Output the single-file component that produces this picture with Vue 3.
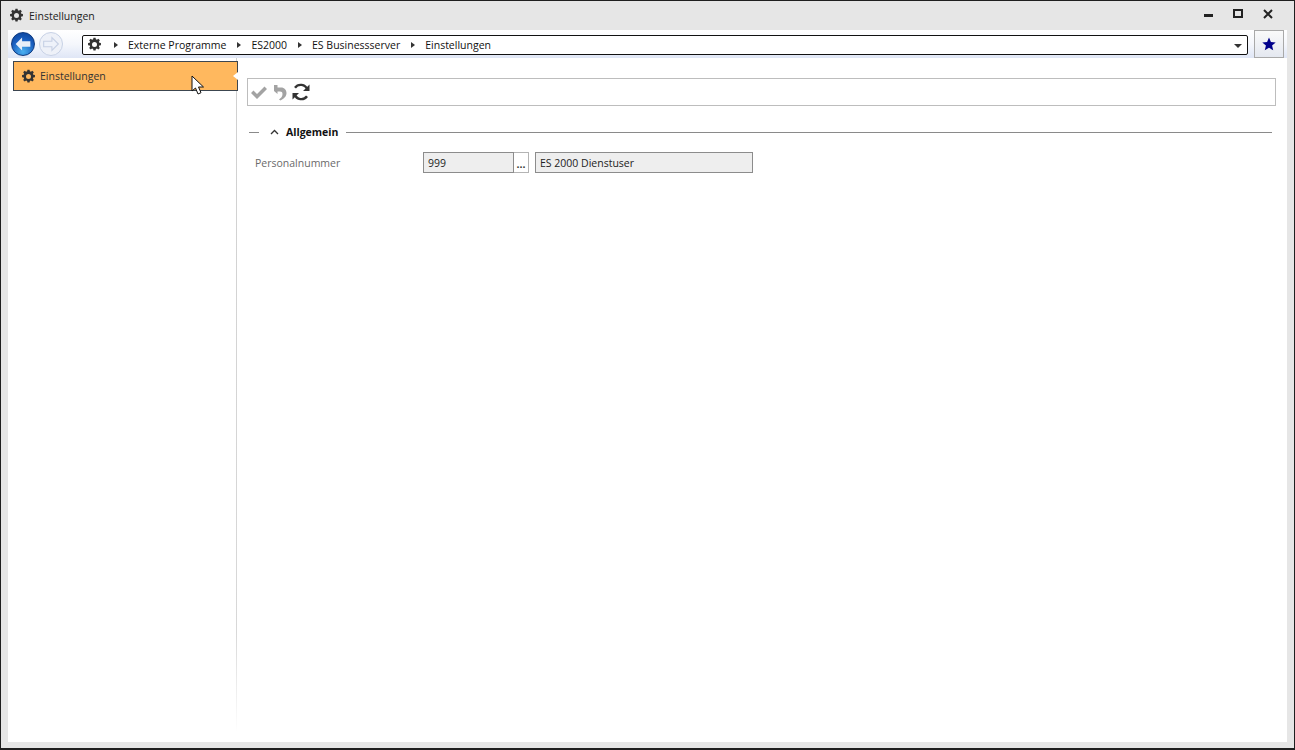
<script setup>
const crumbs = ['Externe Programme', 'ES2000', 'ES Businessserver', 'Einstellungen']
const gear = 'M10.3 1h3.4l.5 2.6 1.7.7 2.2-1.5 2.4 2.4-1.5 2.2.7 1.7 2.6.5v3.4l-2.6.5-.7 1.7 1.5 2.2-2.4 2.4-2.2-1.5-1.7.7-.5 2.6h-3.4l-.5-2.6-1.7-.7-2.2 1.5-2.4-2.4 1.5-2.2-.7-1.7-2.6-.5v-3.4l2.6-.5.7-1.7-1.5-2.2 2.4-2.4 2.2 1.5 1.7-.7zM12 8a4 4 0 1 0 0 8 4 4 0 0 0 0-8z'
</script>

<template>
  <div class="window">
    <header class="titlebar">
      <svg class="title-gear" viewBox="0 0 24 24"><path :d="gear" fill-rule="evenodd" /></svg>
      <span class="title-text">Einstellungen</span>
      <div class="winbtns">
        <svg width="10" height="10" viewBox="0 0 10 10"><rect x="0" y="5" width="9" height="3" fill="#222" /></svg>
        <svg width="11" height="10" viewBox="0 0 11 10"><rect x="1" y="1" width="8" height="7" fill="none" stroke="#222" stroke-width="2" /></svg>
        <svg width="10" height="10" viewBox="0 0 10 10"><path d="M1 1l8 8M9 1l-8 8" stroke="#222" stroke-width="2" /></svg>
      </div>
    </header>

    <main class="client">
      <div class="navbar">
        <div class="round back">
          <svg width="24" height="24" viewBox="0 0 24 24"><path d="M4 12l7-7v4h9v6h-9v4z" fill="#e8eef8" /></svg>
        </div>
        <div class="round forward">
          <svg width="22" height="22" viewBox="0 0 24 24"><path d="M20 12l-7-7v4H4v6h9v4z" fill="#eef2fa" stroke="#c6d0e4" stroke-width="1.2" /></svg>
        </div>
        <div class="address">
          <svg class="addr-gear" viewBox="0 0 24 24"><path :d="gear" fill-rule="evenodd" /></svg>
          <template v-for="c in crumbs" :key="c">
            <i class="tri"></i>
            <span class="crumb">{{ c }}</span>
          </template>
          <i class="drop"></i>
        </div>
        <button class="star">
          <svg width="14" height="14" viewBox="0 0 24 24"><path d="M12 1l3.3 7.6 8.2.7-6.2 5.4 1.9 8.1L12 18.5 4.800 22.800l1.900-8.100L.5 9.300l8.200-.7z" fill="#00008b" /></svg>
        </button>
      </div>

      <div class="body">
        <aside class="side">
          <div class="item">
            <svg class="item-gear" viewBox="0 0 24 24"><path :d="gear" fill-rule="evenodd" /></svg>
            <span>Einstellungen</span>
            <i class="notch"></i>
            <svg class="cursor" width="14" height="20" viewBox="0 0 14 20"><path d="M1 1v15l3.500-3 2.500 6 3-1.300-2.500-5.700H12.500z" fill="#fff" stroke="#111" stroke-width="1" /></svg>
          </div>
        </aside>

        <section class="content">
          <div class="toolbar">
            <svg width="20" height="20" viewBox="0 0 20 20"><path d="M2 11l2.500-2.500L8 12l7.500-7.500L18 7l-10 10z" fill="#a3a3a3" /></svg>
            <svg width="18" height="20" viewBox="0 0 18 20"><path d="M3 3h3.500v2.500H10c3.500 0 5.500 2.500 5.500 5.500 0 3.500-2.500 5.500-6 7.500l-1.500-1c2-1.500 3.500-3 3.500-5.500 0-1.800-1-2.500-2.500-2.500H6.500v2.500L3 9z" fill="#a3a3a3" /></svg>
            <svg width="20" height="20" viewBox="0 0 20 20"><path d="M16.300 7.500A7 7 0 0 0 4 5.800M3.700 12.500A7 7 0 0 0 16 14.200" fill="none" stroke="#333" stroke-width="2.400" /><path d="M18.500 2.500v6.500H12zM1.500 17.500V11H8z" fill="#333" /></svg>
          </div>

          <div class="group-head">
            <span class="dash"></span>
            <svg class="chev" width="9" height="6" viewBox="0 0 9 6"><path d="M1 5l3.500-3.500L8 5" fill="none" stroke="#333" stroke-width="1.300" /></svg>
            <strong>Allgemein</strong>
            <span class="rule"></span>
          </div>

          <div class="form-row">
            <label>Personalnummer</label>
            <div class="field short">999</div>
            <div class="dots">...</div>
            <div class="field long">ES 2000 Dienstuser</div>
          </div>
        </section>
      </div>
    </main>
  </div>
</template>

<style>
html, body { margin: 0; background: #e6e6e6; overflow: hidden; }
</style>

<style scoped>
.window {
  width: 1295px;
  height: 750px;
  box-sizing: border-box;
  border: solid #1f1f1f;
  border-width: 1px 1px 2px 1px;
  background: #e6e6e6;
  display: flex;
  flex-direction: column;
  font-family: "Open Sans", "Noto Sans", sans-serif;
  font-size: 10.5px;
  color: #222;
}
.titlebar {
  height: 29px;
  flex: none;
  display: flex;
  align-items: center;
  padding-left: 8px;
}
.title-gear { width: 15px; height: 15px; fill: #333; margin-right: 5px; }
.title-text { color: #222; }
.winbtns {
  margin-left: auto;
  display: flex;
  align-items: center;
  gap: 19px;
  margin-right: 21px;
  margin-top: -4px;
}
.client {
  flex: 1;
  margin: 0 7px 6px 7px;
  background: #fff;
  display: flex;
  flex-direction: column;
  min-height: 0;
}
.navbar {
  height: 28px;
  flex: none;
  display: flex;
  align-items: center;
  padding-left: 3px;
  background: linear-gradient(#fff, #f5f7fc 50%, #dfe6f6);
}
.round {
  border-radius: 50%;
  box-sizing: border-box;
  display: flex;
  align-items: center;
  justify-content: center;
  flex: none;
}
.back {
  width: 24px;
  height: 24px;
  background: radial-gradient(circle at 50% 85%, #4ab0f0, #1a5fc0 55%, #0b3f96);
  border: 1px solid #0e3a80;
}
.back svg { width: 22px; height: 22px; }
.forward {
  width: 24px;
  height: 24px;
  margin-left: 4px;
  background: #eef1f8;
  border: 1px solid #c8d2e6;
}
.address {
  margin-left: 19px;
  margin-top: 1px;
  width: 1166px;
  height: 20px;
  box-sizing: border-box;
  border: 1px solid #111;
  border-radius: 2px;
  background: #fff;
  display: flex;
  align-items: center;
  padding-left: 4px;
  position: relative;
  color: #111;
}
.addr-gear { width: 15px; height: 15px; fill: #333; }
.tri {
  width: 0;
  height: 0;
  border-left: 4px solid #333;
  border-top: 3.500px solid transparent;
  border-bottom: 3.500px solid transparent;
  margin: 1px 10px 0 12px;
}
.crumb + .tri { margin-left: 11px; }
.drop {
  position: absolute;
  right: 5px;
  top: 8px;
  width: 0;
  height: 0;
  border-top: 4px solid #333;
  border-left: 4px solid transparent;
  border-right: 4px solid transparent;
}
.star {
  margin-left: 6px;
  width: 30px;
  height: 28px;
  box-sizing: border-box;
  padding: 0;
  border: 1px solid #a9a9a9;
  background: linear-gradient(#fafafa, #e4e8f0);
  display: flex;
  align-items: center;
  justify-content: center;
}
.body { flex: 1; display: flex; min-height: 0; }
.side {
  width: 229px;
  flex: none;
  padding: 3px 0 0 5px;
  box-sizing: border-box;
  border-right: 1px solid;
  border-image: linear-gradient(#d0d0d0, #d8d8d8 85%, #fff) 1;
  margin-bottom: 10px;
}
.item {
  width: 225px;
  height: 30px;
  box-sizing: border-box;
  border: 1px solid #3c4650;
  background: #ffb85e;
  display: flex;
  align-items: center;
  padding-left: 7px;
  gap: 4px;
  position: relative;
  color: #333;
}
.item-gear { width: 15px; height: 15px; fill: #333; }
.notch {
  position: absolute;
  right: -1px;
  top: 10px;
  width: 0;
  height: 0;
  border-right: 5px solid #fff;
  border-top: 4px solid transparent;
  border-bottom: 4px solid transparent;
}
.cursor { position: absolute; left: 177px; top: 13px; }
.content { flex: 1; padding: 20px 10px 0 10px; min-width: 0; }
.toolbar {
  height: 28px;
  width: 1029px;
  box-sizing: border-box;
  border: 1px solid #bdbdbd;
  display: flex;
  align-items: center;
  padding-left: 1px;
  gap: 2px;
}
.group-head {
  margin-top: 19px;
  height: 14px;
  display: flex;
  align-items: center;
  padding-left: 2px;
  width: 1023px;
}
.dash { width: 10px; height: 1px; background: #8a8a8a; flex: none; }
.chev { margin-left: 11px; flex: none; }
.group-head strong { margin-left: 7px; font-weight: 700; color: #111; font-size: 10.5px; }
.rule { flex: 1; height: 1px; background: #8a8a8a; margin-left: 8px; }
.form-row {
  display: flex;
  align-items: center;
  margin-top: 13px;
  height: 21px;
}
.form-row label { width: 176px; padding-left: 8px; box-sizing: border-box; color: #6a6a6a; flex: none; }
.field {
  height: 21px;
  box-sizing: border-box;
  border: 1px solid #8c8c8c;
  background: #eeeeee;
  display: flex;
  align-items: center;
  padding-left: 4px;
  color: #222;
}
.short { width: 91px; }
.dots {
  width: 15px;
  height: 21px;
  box-sizing: border-box;
  border: 1px solid #b4b4b4;
  border-left: none;
  text-align: center;
  line-height: 22px;
  font-weight: 700;
  color: #333;
  letter-spacing: 0;
}
.long { width: 218px; margin-left: 6px; }
</style>
